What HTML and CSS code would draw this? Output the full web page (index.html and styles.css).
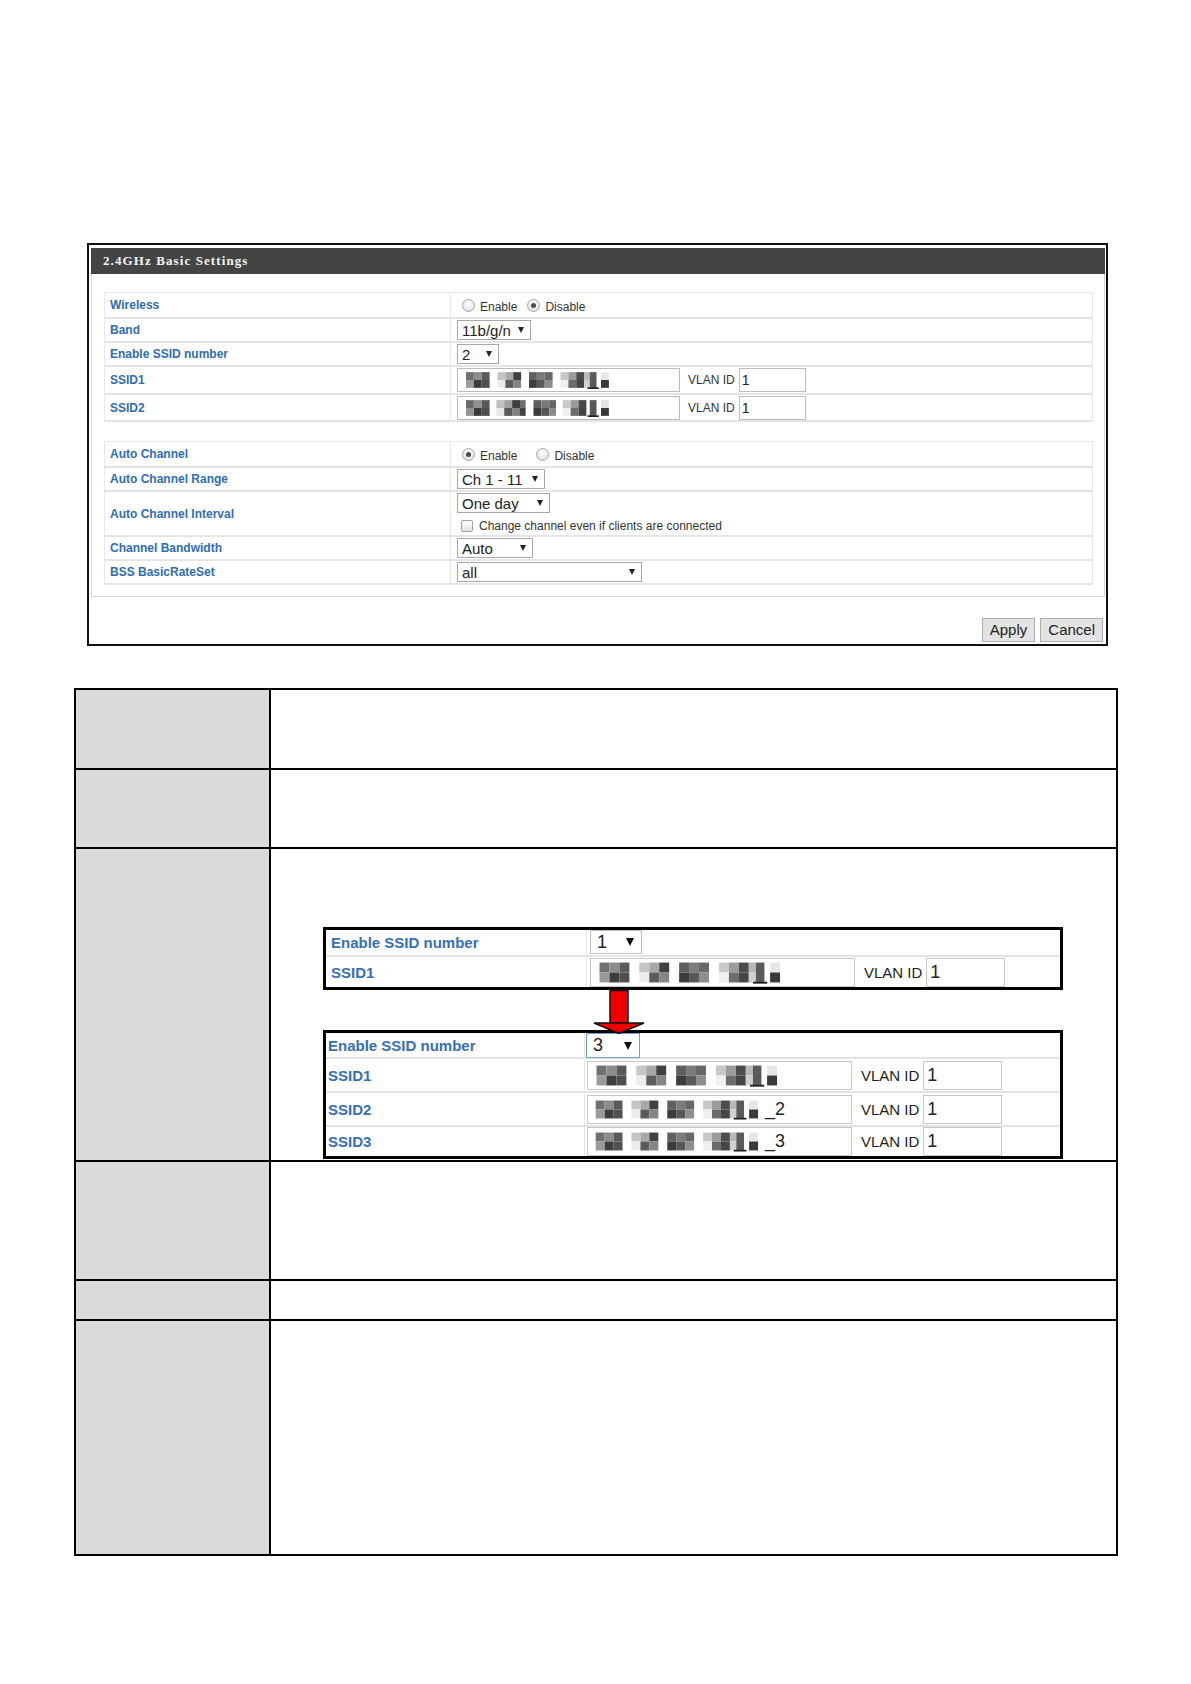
FILE: index.html
```html
<!DOCTYPE html>
<html lang="en">
<head>
<meta charset="utf-8">
<title>2.4GHz Basic Settings</title>
<link rel="stylesheet" href="styles.css">
</head>
<body>
<svg class="defs" aria-hidden="true">
  <symbol id="m1" viewBox="0 0 140 16">
    <rect x="6" y="1" width="7" height="7" fill="#707070"/>
    <rect x="13" y="1" width="7" height="7" fill="#8c8c8c"/>
    <rect x="20" y="1" width="7" height="7" fill="#5a5a5a"/>
    <rect x="6" y="8" width="7" height="7" fill="#9a9a9a"/>
    <rect x="13" y="8" width="7" height="7" fill="#3e3e3e"/>
    <rect x="20" y="8" width="7" height="7" fill="#505050"/>
    <rect x="34" y="1" width="7" height="7" fill="#c6c6c6"/>
    <rect x="41" y="1" width="7" height="7" fill="#a8a8a8"/>
    <rect x="48" y="1" width="7" height="7" fill="#404040"/>
    <rect x="34" y="8" width="7" height="7" fill="#ececec"/>
    <rect x="41" y="8" width="7" height="7" fill="#5c5c5c"/>
    <rect x="48" y="8" width="7" height="7" fill="#858585"/>
    <rect x="62" y="1" width="7" height="7" fill="#606060"/>
    <rect x="69" y="1" width="7" height="7" fill="#7c7c7c"/>
    <rect x="76" y="1" width="7" height="7" fill="#686868"/>
    <rect x="62" y="8" width="7" height="7" fill="#3c3c3c"/>
    <rect x="69" y="8" width="7" height="7" fill="#585858"/>
    <rect x="76" y="8" width="7" height="7" fill="#8e8e8e"/>
    <rect x="90" y="1" width="7" height="7" fill="#c8c8c8"/>
    <rect x="97" y="1" width="7" height="7" fill="#9c9c9c"/>
    <rect x="104" y="1" width="7" height="7" fill="#4c4c4c"/>
    <rect x="111" y="1" width="5" height="7" fill="#b8b8b8"/>
    <rect x="90" y="8" width="7" height="7" fill="#f0f0f0"/>
    <rect x="97" y="8" width="7" height="7" fill="#6c6c6c"/>
    <rect x="104" y="8" width="7" height="7" fill="#464646"/>
    <rect x="111" y="8" width="5" height="7" fill="#d0d0d0"/>
    <rect x="116" y="1" width="6" height="14" fill="#5a5a5a"/>
    <rect x="114" y="14.5" width="10" height="1.5" fill="#222"/>
    <rect x="126" y="1" width="7" height="7" fill="#e6e6e6"/>
    <rect x="126" y="8" width="7" height="7" fill="#3a3a3a"/>
  </symbol>
  <symbol id="m2" viewBox="0 0 140 16">
    <rect x="6" y="1" width="7" height="7" fill="#6a6a6a"/>
    <rect x="13" y="1" width="7" height="7" fill="#909090"/>
    <rect x="20" y="1" width="7" height="7" fill="#585858"/>
    <rect x="6" y="8" width="7" height="7" fill="#949494"/>
    <rect x="13" y="8" width="7" height="7" fill="#3a3a3a"/>
    <rect x="20" y="8" width="7" height="7" fill="#4e4e4e"/>
    <rect x="33" y="1" width="7" height="7" fill="#c0c0c0"/>
    <rect x="40" y="1" width="7" height="7" fill="#a0a0a0"/>
    <rect x="47" y="1" width="7" height="7" fill="#3e3e3e"/>
    <rect x="54" y="1" width="5" height="7" fill="#707070"/>
    <rect x="33" y="8" width="7" height="7" fill="#e8e8e8"/>
    <rect x="40" y="8" width="7" height="7" fill="#5a5a5a"/>
    <rect x="47" y="8" width="7" height="7" fill="#808080"/>
    <rect x="54" y="8" width="5" height="7" fill="#444"/>
    <rect x="66" y="1" width="7" height="7" fill="#5e5e5e"/>
    <rect x="73" y="1" width="7" height="7" fill="#7a7a7a"/>
    <rect x="80" y="1" width="6" height="7" fill="#666"/>
    <rect x="66" y="8" width="7" height="7" fill="#3c3c3c"/>
    <rect x="73" y="8" width="7" height="7" fill="#565656"/>
    <rect x="80" y="8" width="6" height="7" fill="#8c8c8c"/>
    <rect x="92" y="1" width="7" height="7" fill="#cacaca"/>
    <rect x="99" y="1" width="7" height="7" fill="#9a9a9a"/>
    <rect x="106" y="1" width="7" height="7" fill="#4a4a4a"/>
    <rect x="92" y="8" width="7" height="7" fill="#eeeeee"/>
    <rect x="99" y="8" width="7" height="7" fill="#6a6a6a"/>
    <rect x="106" y="8" width="7" height="7" fill="#444"/>
    <rect x="116" y="1" width="6" height="14" fill="#585858"/>
    <rect x="114" y="14.5" width="10" height="1.5" fill="#222"/>
    <rect x="126" y="1" width="7" height="7" fill="#e4e4e4"/>
    <rect x="126" y="8" width="7" height="7" fill="#383838"/>
  </symbol>
</svg>

<div class="page">
  <div class="frame">
    <div class="hdr">2.4GHz Basic Settings</div>
    <div class="panel">
      <div class="grp">
        <div class="row h24">
          <div class="lbl">Wireless</div>
          <div class="val">
            <span class="radio"></span><span class="rtxt">Enable</span>
            <span class="radio on gap10"></span><span class="rtxt">Disable</span>
          </div>
        </div>
        <div class="row h22">
          <div class="lbl">Band</div>
          <div class="val"><span class="sel w74">11b/g/n</span></div>
        </div>
        <div class="row h22">
          <div class="lbl">Enable SSID number</div>
          <div class="val"><span class="sel w42">2</span></div>
        </div>
        <div class="row h26">
          <div class="lbl">SSID1</div>
          <div class="val">
            <span class="inp"><svg class="mos" viewBox="0 0 140 16"><use href="#m1"/></svg></span>
            <span class="vl">VLAN ID</span>
            <span class="vin">1</span>
          </div>
        </div>
        <div class="row h25">
          <div class="lbl">SSID2</div>
          <div class="val">
            <span class="inp"><svg class="mos" viewBox="0 0 140 16"><use href="#m2"/></svg></span>
            <span class="vl">VLAN ID</span>
            <span class="vin">1</span>
          </div>
        </div>
      </div>

      <div class="grp g2">
        <div class="row h24">
          <div class="lbl">Auto Channel</div>
          <div class="val">
            <span class="radio on"></span><span class="rtxt">Enable</span>
            <span class="radio gap19"></span><span class="rtxt">Disable</span>
          </div>
        </div>
        <div class="row h22">
          <div class="lbl">Auto Channel Range</div>
          <div class="val"><span class="sel w88">Ch 1 - 11</span></div>
        </div>
        <div class="row h43">
          <div class="lbl">Auto Channel Interval</div>
          <div class="val col">
            <span class="sel w93">One day</span>
            <span class="cbline"><span class="chk"></span><span class="cbtxt">Change channel even if clients are connected</span></span>
          </div>
        </div>
        <div class="row h22">
          <div class="lbl">Channel Bandwidth</div>
          <div class="val"><span class="sel w76">Auto</span></div>
        </div>
        <div class="row h22">
          <div class="lbl">BSS BasicRateSet</div>
          <div class="val"><span class="sel w185">all</span></div>
        </div>
      </div>
    </div>
    <div class="btns">
      <span class="btn">Apply</span>
      <span class="btn">Cancel</span>
    </div>
  </div>

  <div class="spec">
    <div class="c k"></div><div class="c"></div>
    <div class="c k"></div><div class="c"></div>
    <div class="c k"></div>
    <div class="c demo">
      <div class="inset i1">
        <div class="irow ih25">
          <div class="ilbl">Enable SSID number</div>
          <div class="ival"><span class="bsel">1</span></div>
        </div>
        <div class="irow ih30">
          <div class="ilbl">SSID1</div>
          <div class="ival">
            <span class="binp"><svg class="bmos" viewBox="0 0 140 16"><use href="#m1"/></svg></span>
            <span class="bvl">VLAN ID</span>
            <span class="bvin">1</span>
          </div>
        </div>
      </div>
      <div class="arrow">
        <svg class="arr" width="52" height="44" viewBox="0 0 52 44">
          <rect x="17" y="0.5" width="18" height="33" fill="#ee0000" stroke="#111" stroke-width="1.5"/>
          <polygon points="1,33 51,33 26,43.5" fill="#ee0000" stroke="#111" stroke-width="1.5" stroke-linejoin="miter"/>
        </svg>
      </div>
      <div class="inset i2">
        <div class="irow ih24">
          <div class="ilbl">Enable SSID number</div>
          <div class="ival"><span class="bsel focus">3</span></div>
        </div>
        <div class="irow ih32">
          <div class="ilbl">SSID1</div>
          <div class="ival">
            <span class="binp"><svg class="bmos" viewBox="0 0 140 16"><use href="#m1"/></svg></span>
            <span class="bvl">VLAN ID</span>
            <span class="bvin">1</span>
          </div>
        </div>
        <div class="irow ih32">
          <div class="ilbl">SSID2</div>
          <div class="ival">
            <span class="binp"><svg class="bmos s" viewBox="0 0 140 16"><use href="#m1"/></svg><span class="suf">_2</span></span>
            <span class="bvl">VLAN ID</span>
            <span class="bvin">1</span>
          </div>
        </div>
        <div class="irow ih29">
          <div class="ilbl">SSID3</div>
          <div class="ival">
            <span class="binp"><svg class="bmos s" viewBox="0 0 140 16"><use href="#m1"/></svg><span class="suf">_3</span></span>
            <span class="bvl">VLAN ID</span>
            <span class="bvin">1</span>
          </div>
        </div>
      </div>
    </div>
    <div class="c k"></div><div class="c"></div>
    <div class="c k"></div><div class="c"></div>
    <div class="c k"></div><div class="c"></div>
  </div>
</div>
</body>
</html>
```

FILE: styles.css
```css
body {
  margin: 0;
  background: #fff;
  font-family: "Liberation Sans", Arial, sans-serif;
}

.defs {
  display: block;
  width: 0;
  height: 0;
  overflow: hidden;
}

.page {
  padding-top: 243px;
}

/* ---------- top screenshot frame ---------- */
.frame {
  margin-left: 87px;
  width: 1021px;
  height: 403px;
  box-sizing: border-box;
  border: 2px solid #111;
  padding: 3px 1px 0 2px;
}

.hdr {
  height: 26px;
  line-height: 26px;
  background: #434544;
  color: #f4f4f4;
  font-family: "Liberation Serif", "Times New Roman", serif;
  font-weight: bold;
  font-size: 13px;
  letter-spacing: 1.1px;
  padding-left: 12px;
}

.panel {
  border: 1px solid #d6d6d6;
  border-top: none;
  padding: 18px 11px 11px 12px;
}

.grp {
  border: 1px solid #e8e8e8;
  border-bottom: none;
}

.g2 {
  margin-top: 19px;
}

.row {
  display: grid;
  grid-template-columns: 346px 1fr;
  border-bottom: 2px solid #e4e4e4;
}

.h22 { height: 22px; }
.h24 { height: 24px; }
.h25 { height: 25px; }
.h26 { height: 26px; }
.h43 { height: 43px; }

.lbl {
  display: flex;
  align-items: center;
  padding-left: 5px;
  border-right: 1px solid #e8e8e8;
  color: #2f6db5;
  font-weight: bold;
  font-size: 12px;
}

.val {
  display: flex;
  align-items: center;
  padding-left: 6px;
  font-size: 12px;
  color: #333;
}

.val.col {
  flex-direction: column;
  align-items: flex-start;
  justify-content: flex-start;
  padding-top: 1px;
}

.radio {
  display: inline-flex;
  align-items: center;
  justify-content: center;
  width: 13px;
  height: 13px;
  box-sizing: border-box;
  border-radius: 50%;
  border: 1px solid #a8a8a8;
  background: radial-gradient(circle at 50% 35%, #ffffff 0%, #f2f2f2 40%, #d6d6d6 100%);
  margin-left: 5px;
}

.radio.on::after {
  content: "";
  width: 5px;
  height: 5px;
  border-radius: 50%;
  background: #4a4a4a;
}

.radio.gap10 { margin-left: 10px; }
.radio.gap19 { margin-left: 19px; }

.rtxt {
  margin-left: 5px;
  margin-top: 3px;
}

.sel {
  display: flex;
  align-items: center;
  justify-content: space-between;
  height: 20px;
  box-sizing: border-box;
  border: 1px solid #a9a9a9;
  background: #fff;
  color: #222;
  font-size: 15px;
  padding: 0 6px 0 4px;
}

.sel::after {
  content: "";
  width: 0;
  height: 0;
  border-left: 3.5px solid transparent;
  border-right: 3.5px solid transparent;
  border-top: 6px solid #222;
}

.w42 { width: 42px; }
.w74 { width: 74px; }
.w76 { width: 76px; }
.w88 { width: 88px; }
.w93 { width: 93px; }
.w185 { width: 185px; }

.inp {
  display: flex;
  align-items: center;
  width: 223px;
  height: 24px;
  box-sizing: border-box;
  border: 1px solid #bdbdbd;
  background: #fff;
  padding-left: 0;
}

.mos {
  width: 160px;
  height: 18px;
}

.vl {
  margin-left: 8px;
  color: #333;
}

.vin {
  display: flex;
  align-items: center;
  width: 67px;
  height: 24px;
  box-sizing: border-box;
  border: 1px solid #bdbdbd;
  padding-left: 2px;
  font-size: 14px;
  color: #222;
  margin-left: 4px;
}

.cbline {
  display: flex;
  align-items: center;
  margin-top: 6px;
}

.chk {
  width: 12px;
  height: 12px;
  box-sizing: border-box;
  border: 1px solid #a0a0a0;
  border-radius: 2px;
  background: linear-gradient(#fdfdfd, #e2e2e2);
  margin-left: 4px;
}

.cbtxt {
  margin-left: 6px;
  font-size: 12px;
  color: #333;
}

.btns {
  display: flex;
  justify-content: flex-end;
  gap: 5px;
  margin-top: 21px;
  padding-right: 2px;
}

.btn {
  height: 24px;
  line-height: 22px;
  box-sizing: border-box;
  border: 1px solid #adadad;
  background: #e3e3e3;
  color: #222;
  font-size: 15px;
  padding: 0 7px;
}

/* ---------- description table ---------- */
.spec {
  margin: 42px 0 0 74px;
  width: 1042px;
  display: grid;
  grid-template-columns: 195px 847px;
  grid-template-rows: 80px 79px 313px 119px 40px 235px;
  border-top: 2px solid #000;
  border-left: 2px solid #000;
}

.c {
  box-sizing: border-box;
  border-right: 2px solid #000;
  border-bottom: 2px solid #000;
  background: #fff;
}

.c.k {
  background: #d9d9d9;
}

.demo {
  padding: 78px 0 0 52px;
}

.inset {
  width: 740px;
  box-sizing: border-box;
  border: 3px solid #000;
  background: #fff;
}

.irow {
  display: grid;
  border-bottom: 2px solid #e3e3e3;
}

.irow:last-child {
  border-bottom: none;
}

.i1 .irow { grid-template-columns: 261px 1fr; }
.i2 .irow { grid-template-columns: 259px 1fr; }

.ih24 { height: 24px; }
.ih25 { height: 25px; }
.ih29 { height: 29px; }
.ih30 { height: 30px; }
.ih32 { height: 32px; }

.ilbl {
  display: flex;
  align-items: center;
  border-right: 1px solid #e6e6e6;
  color: #3670b8;
  font-weight: bold;
  font-size: 15px;
  padding-left: 5px;
}

.i2 .ilbl { padding-left: 2px; }

.ival {
  display: flex;
  align-items: center;
  padding-left: 3px;
  color: #222;
}

.i2 .ival { padding-left: 1px; }

.bsel {
  display: flex;
  align-items: center;
  justify-content: space-between;
  width: 52px;
  height: 24px;
  box-sizing: border-box;
  border: 1px solid #bdbdbd;
  background: #fff;
  font-size: 18px;
  padding: 0 7px 0 6px;
  align-self: flex-start;
}

.bsel::after {
  content: "";
  width: 0;
  height: 0;
  border-left: 4px solid transparent;
  border-right: 4px solid transparent;
  border-top: 8px solid #111;
}

.bsel.focus {
  width: 54px;
  height: 25px;
  border-color: #6f9bd8;
}

.binp {
  display: flex;
  align-items: center;
  width: 265px;
  height: 29px;
  box-sizing: border-box;
  border: 1px solid #c8c8c8;
  background: #fff;
  padding-left: 0;
  font-size: 18px;
  color: #222;
}

.i2 .binp { margin-left: 1px; }

.bmos {
  width: 199px;
  height: 23px;
}

.bmos.s {
  width: 179px;
  height: 21px;
}

.suf {
  margin-left: -2px;
}

.bvl {
  margin-left: 9px;
  font-size: 15px;
  color: #222;
}

.bvin {
  display: flex;
  align-items: center;
  width: 79px;
  height: 29px;
  box-sizing: border-box;
  border: 1px solid #c8c8c8;
  margin-left: 4px;
  padding-left: 3px;
  font-size: 18px;
  color: #222;
}

.arrow {
  height: 40px;
}

.arr {
  display: block;
  position: relative;
  margin-left: 270px;
  overflow: visible;
}
```
